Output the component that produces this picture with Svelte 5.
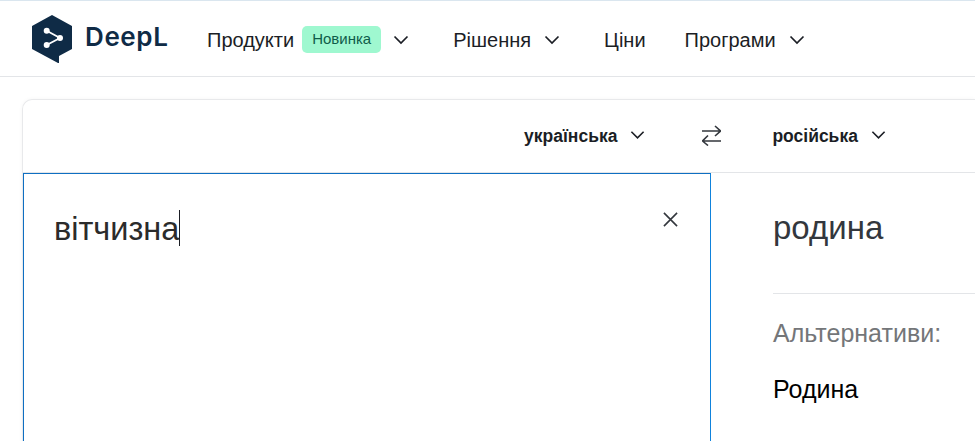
<script lang="ts">
	const nav = [
		{ label: 'Продукти', badge: 'Новинка' },
		{ label: 'Рішення' },
		{ label: 'Ціни', plain: true },
		{ label: 'Програми' }
	];
</script>

{#snippet chevron()}
	<svg class="chevron" viewBox="0 0 16 10" aria-hidden="true">
		<path d="M1.5 1.5 8 8l6.500-6.500" />
	</svg>
{/snippet}

<div class="page">
	<header class="top">
		<a class="brand" href="#home">
			<svg class="logo" viewBox="0 0 40 48" aria-hidden="true">
				<path d="M20 0 40 11V34L27 41V48H26L0 34V11Z" fill="#0f2b46" />
				<path d="M14.700 15.700 28 23 14.700 30" fill="none" stroke="#fff" stroke-width="1.800" />
				<circle cx="14.700" cy="15.700" r="3" fill="#fff" />
				<circle cx="28" cy="23" r="3" fill="#fff" />
				<circle cx="14.700" cy="30" r="3" fill="#fff" />
			</svg>
			<span class="wordmark">DeepL</span>
		</a>
		<nav class="nav">
			{#each nav as item (item.label)}
				<a class="nav-item" class:plain={item.plain} href="#nav">
					<span>{item.label}</span>
					{#if item.badge}<span class="badge">{item.badge}</span>{/if}
					{#if !item.plain}{@render chevron()}{/if}
				</a>
			{/each}
		</nav>
	</header>

	<main class="card">
		<div class="langs">
			<button class="lang" type="button">українська {@render chevron()}</button>
			<button class="swap" type="button" aria-label="Поміняти мови">
				<svg viewBox="0 0 19 21" aria-hidden="true">
					<path d="M0 6h18M13 1l5.500 5-5.500 5M19 16H1M6 10.500.5 16 6 20.500" />
				</svg>
			</button>
			<button class="lang" type="button">російська {@render chevron()}</button>
		</div>
		<div class="panes">
			<section class="input">
				<p class="source-text">вітчизна<span class="caret"></span></p>
				<button class="clear" type="button" aria-label="Очистити">
					<svg viewBox="0 0 16 16" aria-hidden="true"><path d="M1 1l14 14M15 1 1 15" /></svg>
				</button>
			</section>
			<section class="output">
				<p class="result">родина</p>
				<div class="alts">
					<p class="alts-title">Альтернативи:</p>
					<p class="alt">Родина</p>
				</div>
			</section>
		</div>
	</main>
</div>

<style>
	:global(body) {
		margin: 0;
		background: #fff;
		overflow: hidden;
	}

	.page {
		height: 441px;
		overflow: hidden;
		border-top: 1px solid #dae6ef;
		box-sizing: border-box;
		font-family: 'Liberation Sans', Arial, sans-serif;
		color: #1b1e25;
	}

	.top {
		display: flex;
		align-items: center;
		height: 75px;
		padding-left: 32px;
		border-bottom: 1px solid #e3e5e8;
	}

	.brand {
		display: flex;
		align-items: center;
		gap: 13px;
		width: 175px;
		text-decoration: none;
		color: #0f2b46;
	}

	.logo {
		width: 40px;
		height: 48px;
		margin-top: 1px;
	}

	.wordmark {
		font-family: Inter, sans-serif;
		font-size: 26px;
		font-weight: 600;
		letter-spacing: 0.600px;
		margin-top: -4px;
	}

	.nav {
		display: flex;
		align-items: center;
		margin-top: 4px;
	}

	.nav-item {
		display: flex;
		align-items: center;
		margin-right: 44px;
		font-size: 20px;
		color: #1b1e25;
		text-decoration: none;
	}

	.nav-item.plain {
		margin-right: 39px;
	}

	.badge {
		margin: -3px 0 0 8px;
		padding: 0 10px;
		height: 27px;
		line-height: 25px;
		font-size: 15px;
		color: #0f5c4a;
		background: #9ff8d0;
		border-radius: 5px;
	}

	.chevron {
		width: 16px;
		height: 10px;
		margin: -2px 0 0 13px;
		fill: none;
		stroke: #1b1e25;
		stroke-width: 1.700;
	}

	.badge + .chevron {
		margin-left: 12px;
	}

	.card {
		margin: 22px 0 0 22px;
		border: 1px solid #e8e9eb;
		border-right: 0;
		border-bottom: 0;
		border-radius: 10px 0 0 0;
		box-shadow: 0 0 4px rgb(0 0 0 / 4%);
	}

	.langs {
		display: flex;
		align-items: center;
		height: 72px;
		padding-left: 501px;
		border-bottom: 1px solid #e3e5e8;
	}

	.lang {
		display: flex;
		align-items: center;
		padding: 0;
		border: 0;
		background: none;
		font: bold 17.500px 'Liberation Sans', Arial, sans-serif;
		color: #1b1e25;
		white-space: nowrap;
	}

	.lang .chevron {
		width: 15px;
		margin: -2px 0 0 13px;
	}

	.swap {
		width: 19px;
		height: 21px;
		margin: -1px 51px 0 57px;
		padding: 0;
		border: 0;
		background: none;
	}

	.swap svg {
		display: block;
		fill: none;
		stroke: #33373d;
		stroke-width: 1.600;
	}

	.panes {
		display: flex;
		height: 270px;
	}

	.input {
		position: relative;
		box-sizing: border-box;
		flex: none;
		width: 688px;
		padding: 31px 30px;
		border: 1px solid #0f6fc2;
		border-right-color: #0f82dc;
		border-bottom: 0;
	}

	.source-text {
		margin: 0;
		font-size: 32.500px;
		line-height: 48px;
		color: #2b2b2b;
	}

	.caret {
		display: inline-block;
		width: 1px;
		height: 36px;
		background: #1b1e25;
		vertical-align: -6px;
	}

	.clear {
		position: absolute;
		top: 38px;
		right: 32px;
		width: 15px;
		height: 15px;
		padding: 0;
		border: 0;
		background: none;
	}

	.clear svg {
		display: block;
		fill: none;
		stroke: #33373d;
		stroke-width: 1.700;
	}

	.output {
		flex: 1;
		min-width: 0;
		padding: 31px 0 0 62px;
	}

	.result {
		margin: 0;
		font-size: 33px;
		line-height: 48px;
		color: #33373d;
	}

	.alts {
		margin-top: 41px;
		padding-top: 24px;
		border-top: 1px solid #e3e5e8;
	}

	.alts-title {
		margin: 0;
		font-size: 25px;
		line-height: 30px;
		color: #747679;
	}

	.alt {
		margin: 26px 0 0;
		font-size: 25px;
		line-height: 30px;
		color: #000;
	}
</style>
